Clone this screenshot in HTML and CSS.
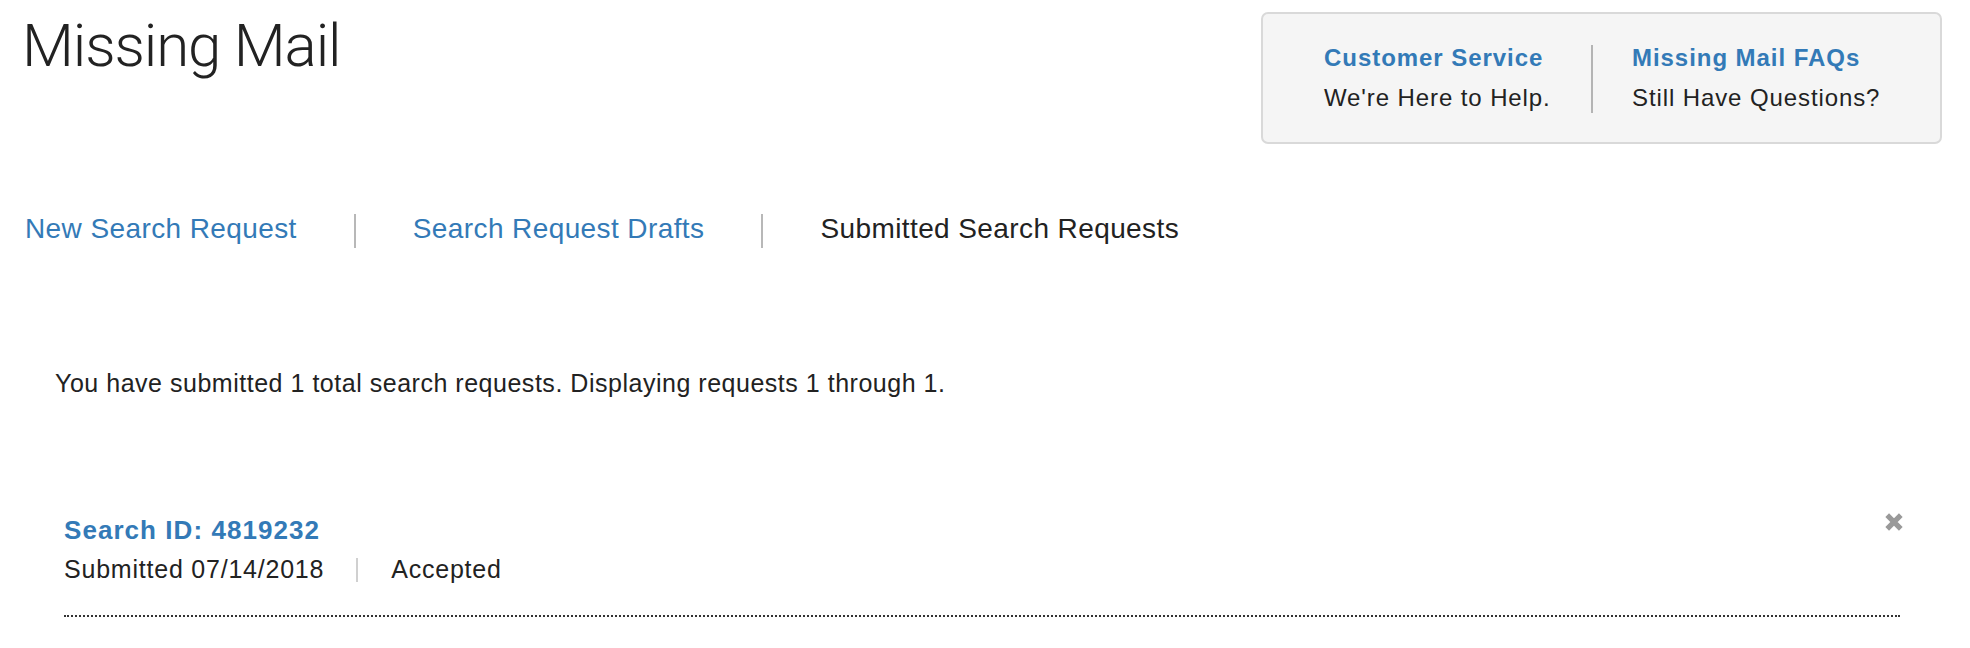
FILE: index.html
```html
<!DOCTYPE html>
<html lang="en">
<head>
<meta charset="utf-8">
<title>Missing Mail</title>
<link rel="stylesheet" href="styles.css">
</head>
<body>
<div class="page">
  <header class="top">
    <h1 class="title">Missing Mail</h1>
    <div class="help">
      <div class="help-col help-col-1">
        <a class="help-link" href="#">Customer Service</a>
        <span class="help-text">We're Here to Help.</span>
      </div>
      <div class="help-sep"></div>
      <div class="help-col help-col-2">
        <a class="help-link" href="#">Missing Mail FAQs</a>
        <span class="help-text">Still Have Questions?</span>
      </div>
    </div>
  </header>

  <nav class="tabs">
    <a class="tab" href="#">New Search Request</a>
    <a class="tab" href="#">Search Request Drafts</a>
    <span class="tab tab-active">Submitted Search Requests</span>
  </nav>

  <p class="summary">You have submitted 1 total search requests. Displaying requests 1 through 1.</p>

  <ul class="results">
    <li class="result">
      <div class="result-main">
        <a class="result-id" href="#">Search ID: 4819232</a>
        <div class="result-meta">
          <span class="result-date">Submitted 07/14/2018</span>
          <span class="meta-sep"></span>
          <span class="result-status">Accepted</span>
        </div>
      </div>
      <button class="remove" type="button" aria-label="Remove">
        <svg viewBox="0 0 20 20" width="20" height="20" aria-hidden="true">
          <path d="M3.2 3.2 L16.8 16.8 M16.8 3.2 L3.2 16.8" stroke="#999" stroke-width="5.2" stroke-linecap="butt" fill="none"/>
        </svg>
      </button>
    </li>
  </ul>
</div>
</body>
</html>
```

FILE: styles.css
```css
* { box-sizing: border-box; }

html, body {
  margin: 0;
  padding: 0;
  background: #ffffff;
}

body {
  font-family: "Liberation Sans", Arial, Helvetica, sans-serif;
  color: #222222;
}

a {
  color: #337ab7;
  text-decoration: none;
}

.page {
  padding: 0 28px 0 24px;
}

/* header */
.top {
  display: flex;
  justify-content: space-between;
  align-items: flex-start;
}

.title {
  margin: 16px 0 0 -2px;
  font-family: Roboto, "Liberation Sans", sans-serif;
  font-weight: 300;
  font-size: 60px;
  line-height: 60px;
  letter-spacing: -1.1px;
  color: #222222;
}

.help {
  margin-top: 12px;
  display: flex;
  align-items: center;
  padding: 25px 60px 24px 61px;
  background: #f5f5f5;
  border: 2px solid #d9d9d9;
  border-radius: 7px;
}

.help-col {
  display: flex;
  flex-direction: column;
  font-size: 24px;
  white-space: nowrap;
}

.help-col-1 { width: 225px; }
.help-col-2 { width: 248px; }

.help-link {
  font-weight: bold;
  line-height: 38px;
  letter-spacing: 0.95px;
}

.help-text {
  line-height: 41px;
  letter-spacing: 0.9px;
  color: #222222;
}

.help-sep {
  width: 2px;
  height: 68px;
  background: #b4b4b4;
  margin: 0 39px 0 42px;
}

/* tabs */
.tabs {
  display: flex;
  margin-top: 70px;
}

.tab {
  display: block;
  font-size: 28px;
  line-height: 30px;
  padding: 0 57px 4px;
  letter-spacing: 0.4px;
  white-space: nowrap;
}

.tab:first-child { padding-left: 1px; }

.tab + .tab {
  border-left: 2px solid #b8b8b8;
}

.tab-active {
  color: #222222;
}

/* summary */
.summary {
  margin: 120px 0 0 31px;
  font-size: 25px;
  line-height: 30px;
  letter-spacing: 0.52px;
}

/* results */
.results {
  list-style: none;
  margin: 116px 0 0 0;
  padding: 0 42px 0 40px;
}

.result {
  display: flex;
  justify-content: space-between;
  align-items: flex-start;
  padding-bottom: 29px;
  border-bottom: 2px dotted #333333;
}

.result-main {
  display: flex;
  flex-direction: column;
}

.result-id {
  font-weight: bold;
  font-size: 26px;
  line-height: 32px;
  letter-spacing: 1.05px;
}

.result-meta {
  display: flex;
  align-items: center;
  margin-top: 6px;
  font-size: 25px;
  line-height: 34px;
  letter-spacing: 0.78px;
}

.meta-sep {
  width: 2px;
  height: 24px;
  background: #d0d0d0;
  margin: 2px 33px 0 32px;
}

.remove {
  margin: -2px -4px 0 0;
  padding: 0;
  border: 0;
  background: transparent;
  width: 20px;
  height: 20px;
  cursor: pointer;
}

.remove svg { display: block; }
```
